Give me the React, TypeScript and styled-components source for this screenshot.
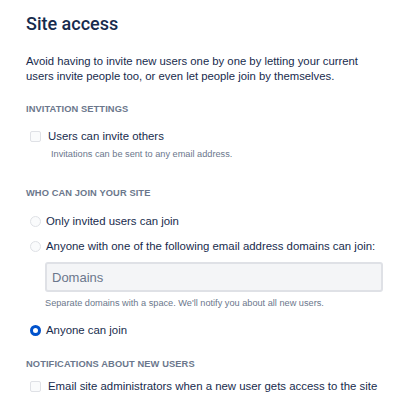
import { createGlobalStyle } from 'styled-components';
import styled from 'styled-components';

const GlobalStyle = createGlobalStyle`
  html, body {
    margin: 0;
    padding: 0;
    background: #ffffff;
  }
  body {
    font-family: "Liberation Sans", Arial, sans-serif;
    color: #172b4d;
  }
`;

const Page = styled.div`
  display: flex;
  flex-direction: column;
  padding: 14px 0 0 26px;
  width: 405px;
  box-sizing: border-box;
`;

const Title = styled.h1`
  margin: 0;
  font-family: Roboto, "Liberation Sans", sans-serif;
  font-size: 18px;
  line-height: 20px;
  font-weight: 500;
  color: #172b4d;
`;

const Intro = styled.p`
  margin: 20px 0 0;
  font-size: 11.3px;
  line-height: 15px;
  color: #172b4d;
`;

const SectionTitle = styled.h2<{ $gap: number }>`
  margin: ${(p) => p.$gap}px 0 0;
  font-size: 9.3px;
  line-height: 12px;
  font-weight: 700;
  color: #6b778c;
  letter-spacing: 0.1px;
`;

const Row = styled.label<{ $gap: number; $indent: number }>`
  display: flex;
  align-items: center;
  height: 16px;
  margin-top: ${(p) => p.$gap}px;
  gap: ${(p) => p.$indent}px;
  padding-left: 4px;
  font-size: 11.4px;
  color: #172b4d;
  cursor: pointer;
`;

const Box = styled.span`
  width: 11px;
  height: 11px;
  box-sizing: border-box;
  border: 1.5px solid #dfe1e6;
  background: #fafbfc;
  border-radius: 2px;
  flex-shrink: 0;
`;

const Radio = styled.span<{ $checked?: boolean }>`
  width: 11px;
  height: 11px;
  box-sizing: border-box;
  border-radius: 50%;
  flex-shrink: 0;
  border: ${(p) => (p.$checked ? '3.5px solid #0052cc' : '1.5px solid #dfe1e6')};
  background: ${(p) => (p.$checked ? '#ffffff' : '#fafbfc')};
`;

const Help = styled.div<{ $gap: number; $indent: number }>`
  margin: ${(p) => p.$gap}px 0 0 ${(p) => p.$indent}px;
  font-size: 9.2px;
  line-height: 12px;
  color: #6b778c;
`;

const DomainInput = styled.div`
  margin: 8px 0 0 19px;
  width: 338px;
  height: 30px;
  box-sizing: border-box;
  display: flex;
  align-items: center;
  padding-left: 5px;
  background: #f4f5f7;
  border: 2px solid #dfe1e6;
  border-radius: 3px;
  font-size: 13px;
  color: #6b778c;
`;

export default function App() {
  return (
    <Page>
      <GlobalStyle />
      <Title>Site access</Title>
      <Intro>
        Avoid having to invite new users one by one by letting your current
        <br />
        users invite people too, or even let people join by themselves.
      </Intro>

      <SectionTitle $gap={19}>INVITATION SETTINGS</SectionTitle>
      <Row $gap={13} $indent={7}>
        <Box />
        Users can invite others
      </Row>
      <Help $gap={4} $indent={25}>Invitations can be sent to any email address.</Help>

      <SectionTitle $gap={27}>WHO CAN JOIN YOUR SITE</SectionTitle>
      <Row $gap={14} $indent={5}>
        <Radio />
        Only invited users can join
      </Row>
      <Row $gap={9} $indent={5}>
        <Radio />
        Anyone with one of the following email address domains can join:
      </Row>
      <DomainInput>Domains</DomainInput>
      <Help $gap={5} $indent={19}>
        Separate domains with a space. We'll notify you about all new users.
      </Help>
      <Row $gap={13} $indent={5}>
        <Radio $checked />
        Anyone can join
      </Row>

      <SectionTitle $gap={20}>NOTIFICATIONS ABOUT NEW USERS</SectionTitle>
      <Row $gap={8} $indent={7}>
        <Box />
        Email site administrators when a new user gets access to the site
      </Row>
    </Page>
  );
}
